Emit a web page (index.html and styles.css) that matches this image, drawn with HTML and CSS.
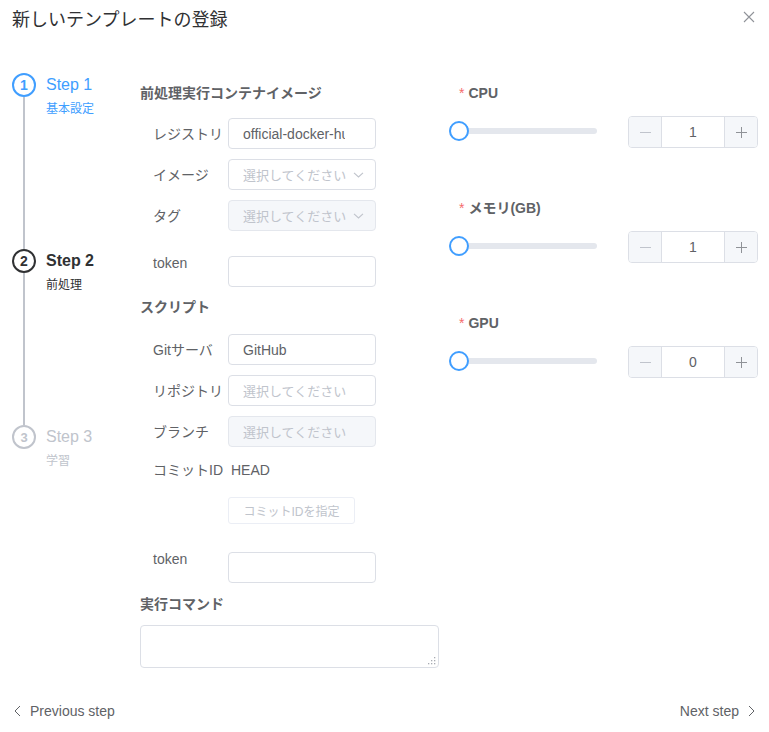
FILE: index.html
```html
<!DOCTYPE html>
<html lang="ja">
<head>
<meta charset="utf-8">
<title>新しいテンプレートの登録</title>
<link rel="stylesheet" href="styles.css">
</head>
<body>
<div class="dialog">
  <header class="dlg-head">
    <h1 class="dlg-title">新しいテンプレートの登録</h1>
    <button class="close-btn" aria-label="close">
      <svg width="12" height="12" viewBox="0 0 12 12"><path d="M1 1L11 11M11 1L1 11" stroke="#909399" stroke-width="1.1" fill="none"/></svg>
    </button>
  </header>

  <div class="dlg-body">
    <!-- steps -->
    <div class="steps">
      <div class="step done">
        <div class="step-rail"><div class="step-icon">1</div><div class="step-line"></div></div>
        <div class="step-text"><div class="step-title">Step 1</div><div class="step-desc">基本設定</div></div>
      </div>
      <div class="step active">
        <div class="step-rail"><div class="step-icon">2</div><div class="step-line"></div></div>
        <div class="step-text"><div class="step-title">Step 2</div><div class="step-desc">前処理</div></div>
      </div>
      <div class="step wait last">
        <div class="step-rail"><div class="step-icon">3</div></div>
        <div class="step-text"><div class="step-title">Step 3</div><div class="step-desc">学習</div></div>
      </div>
    </div>

    <!-- form -->
    <div class="form-col">
      <div class="sec-title first">前処理実行コンテナイメージ</div>
      <div class="row r-first">
        <label class="lbl">レジストリ</label>
        <div class="field"><input class="inp inp-sel" value="official-docker-hub" readonly></div>
      </div>
      <div class="row">
        <label class="lbl">イメージ</label>
        <div class="field sel">
          <input class="inp inp-sel" placeholder="選択してください" readonly>
          <svg class="arrow" width="11" height="6" viewBox="0 0 11 6"><path d="M1 0.8L5.5 5L10 0.8" stroke="#c0c4cc" stroke-width="1.1" fill="none"/></svg>
        </div>
      </div>
      <div class="row">
        <label class="lbl">タグ</label>
        <div class="field sel">
          <input class="inp inp-sel disabled" placeholder="選択してください" disabled>
          <svg class="arrow" width="11" height="6" viewBox="0 0 11 6"><path d="M1 0.8L5.5 5L10 0.8" stroke="#c0c4cc" stroke-width="1.1" fill="none"/></svg>
        </div>
      </div>
      <div class="row top-row token1">
        <label class="lbl">token</label>
        <div class="field"><input class="inp"></div>
      </div>

      <div class="sec-title script">スクリプト</div>
      <div class="row r-first2">
        <label class="lbl">Gitサーバ</label>
        <div class="field"><input class="inp" value="GitHub" readonly></div>
      </div>
      <div class="row">
        <label class="lbl">リポジトリ</label>
        <div class="field"><input class="inp" placeholder="選択してください" readonly></div>
      </div>
      <div class="row">
        <label class="lbl">ブランチ</label>
        <div class="field"><input class="inp disabled" placeholder="選択してください" disabled></div>
      </div>
      <div class="row text-row">
        <label class="lbl">コミットID</label>
        <span class="val">HEAD</span>
      </div>
      <button class="commit-btn" disabled>コミットIDを指定</button>
      <div class="row top-row token2">
        <label class="lbl">token</label>
        <div class="field"><input class="inp"></div>
      </div>

      <div class="sec-title cmd">実行コマンド</div>
      <div class="ta-wrap">
        <textarea class="ta"></textarea>
        <svg class="grip" width="8" height="8" viewBox="0 0 8 8">
          <rect x="6" y="0" width="1.3" height="1.3" fill="#a8abb2"/>
          <rect x="3" y="3" width="1.3" height="1.3" fill="#a8abb2"/>
          <rect x="6" y="3" width="1.3" height="1.3" fill="#a8abb2"/>
          <rect x="0" y="6" width="1.3" height="1.3" fill="#a8abb2"/>
          <rect x="3" y="6" width="1.3" height="1.3" fill="#a8abb2"/>
          <rect x="6" y="6" width="1.3" height="1.3" fill="#a8abb2"/>
        </svg>
      </div>
    </div>

    <!-- resources -->
    <div class="res-col">
      <div class="res">
        <div class="res-label"><span class="star">*</span>CPU</div>
        <div class="res-row">
          <div class="slider"><div class="track"></div><div class="thumb"></div></div>
          <div class="num">
            <span class="num-btn minus"><svg width="11" height="11" viewBox="0 0 11 11"><path d="M0 5.5H11" stroke="#c0c4cc" stroke-width="1"/></svg></span>
            <span class="num-val">1</span>
            <span class="num-btn plus"><svg width="11" height="11" viewBox="0 0 11 11"><path d="M0 5.5H11M5.5 0V11" stroke="#8f9297" stroke-width="1"/></svg></span>
          </div>
        </div>
      </div>
      <div class="res">
        <div class="res-label"><span class="star">*</span>メモリ(GB)</div>
        <div class="res-row">
          <div class="slider"><div class="track"></div><div class="thumb"></div></div>
          <div class="num">
            <span class="num-btn minus"><svg width="11" height="11" viewBox="0 0 11 11"><path d="M0 5.5H11" stroke="#c0c4cc" stroke-width="1"/></svg></span>
            <span class="num-val">1</span>
            <span class="num-btn plus"><svg width="11" height="11" viewBox="0 0 11 11"><path d="M0 5.5H11M5.5 0V11" stroke="#8f9297" stroke-width="1"/></svg></span>
          </div>
        </div>
      </div>
      <div class="res">
        <div class="res-label"><span class="star">*</span>GPU</div>
        <div class="res-row">
          <div class="slider"><div class="track"></div><div class="thumb"></div></div>
          <div class="num">
            <span class="num-btn minus"><svg width="11" height="11" viewBox="0 0 11 11"><path d="M0 5.5H11" stroke="#c0c4cc" stroke-width="1"/></svg></span>
            <span class="num-val">0</span>
            <span class="num-btn plus"><svg width="11" height="11" viewBox="0 0 11 11"><path d="M0 5.5H11M5.5 0V11" stroke="#8f9297" stroke-width="1"/></svg></span>
          </div>
        </div>
      </div>
    </div>
  </div>

  <footer class="dlg-foot">
    <a class="nav prev"><svg width="7" height="12" viewBox="0 0 7 12"><path d="M6 1L1 6L6 11" stroke="#606266" stroke-width="1" fill="none"/></svg><span>Previous step</span></a>
    <a class="nav next"><span>Next step</span><svg width="7" height="12" viewBox="0 0 7 12"><path d="M1 1L6 6L1 11" stroke="#606266" stroke-width="1" fill="none"/></svg></a>
  </footer>
</div>
</body>
</html>
```

FILE: styles.css
```css
* { box-sizing: border-box; }
html, body { margin: 0; padding: 0; background: #fff; }
body {
  font-family: "Liberation Sans", "Noto Sans CJK JP", sans-serif;
  font-size: 14px;
  color: #606266;
}
.dialog { width: 769px; height: 732px; }

.dlg-head {
  height: 40px;
  display: flex;
  justify-content: space-between;
  align-items: flex-start;
  padding: 8px 14px 0 12px;
}
.dlg-title {
  margin: 0;
  font-size: 18px;
  font-weight: normal;
  line-height: 24px;
  color: #303133;
}
.close-btn {
  border: 0;
  background: none;
  padding: 0;
  margin-top: 3px;
  width: 12px;
  height: 12px;
  display: block;
}
.close-btn svg { display: block; }

.dlg-body {
  display: grid;
  grid-template-columns: 140px 300px 1fr;
}

/* steps */
.steps { padding-top: 33px; display: flex; flex-direction: column; }
.step { display: flex; height: 176px; padding-left: 12px; }
.step.last { height: auto; }
.step-rail { width: 24px; display: flex; flex-direction: column; align-items: center; }
.step-icon {
  width: 24px; height: 24px;
  border: 2px solid #409eff;
  border-radius: 50%;
  display: flex; align-items: center; justify-content: center;
  font-size: 14px; font-weight: bold;
  line-height: 1;
  flex: none;
}
.step-line { width: 2px; flex: 1; background: #c0c4cc; }
.step-text { margin-left: 10px; }
.step-title { font-size: 16px; line-height: 24px; }
.step-desc { font-size: 12px; line-height: 20px; margin-top: 2px; }

.step.done .step-icon { border-color: #409eff; color: #409eff; }
.step.done .step-title, .step.done .step-desc { color: #409eff; }
.step.active .step-icon { border-color: #303133; color: #303133; }
.step.active .step-title { color: #303133; font-weight: bold; }
.step.active .step-desc { color: #303133; }
.step.wait .step-icon { border-color: #c0c4cc; color: #c0c4cc; font-size: 13px; }
.step.wait .step-title, .step.wait .step-desc { color: #c0c4cc; }

/* form */
.form-col { padding-top: 43px; display: flex; flex-direction: column; align-items: flex-start; }
.sec-title { font-weight: bold; font-size: 14px; line-height: 20px; color: #606266; }
.sec-title.script { margin-top: 10px; }
.sec-title.cmd { margin-top: 11px; }

.row { display: flex; align-items: center; height: 31px; margin-top: 10px; padding-left: 13px; }
.row.r-first { margin-top: 15px; }
.row.r-first2 { margin-top: 17px; }
.row.top-row { align-items: flex-start; height: auto; }
.row.top-row .lbl { line-height: 20px; }
.row.top-row .field { margin-top: 3px; }
.row.token1 { margin-top: 22px; }
.row.token2 { margin-top: 25px; }
.row.text-row { height: 20px; margin-top: 13px; }

.lbl { width: 75px; line-height: 20px; color: #606266; white-space: nowrap; }
.val { color: #606266; line-height: 20px; padding-left: 3px; }

.field { position: relative; width: 148px; height: 31px; }
.inp {
  width: 148px; height: 31px;
  border: 1px solid #dcdfe6;
  border-radius: 4px;
  padding: 0 14px;
  font-family: inherit;
  font-size: 14px;
  color: #606266;
  background: #fff;
  outline: none;
}
.inp-sel { padding-right: 30px; }
.inp::placeholder { color: #c0c4cc; opacity: 1; font-size: 13px; }
.inp.disabled { background: #f5f7fa; border-color: #e4e7ed; }
.sel .inp-sel { padding-right: 26px; }
.arrow { position: absolute; right: 12px; top: 13px; }

.commit-btn {
  margin-top: 17px;
  margin-left: 88px;
  width: 127px;
  height: 27px;
  border: 1px solid #ebeef5;
  border-radius: 3px;
  background: #fff;
  color: #c0c4cc;
  font-family: inherit;
  font-size: 12px;
  padding: 0;
}

.ta-wrap { position: relative; margin-top: 11px; width: 299px; height: 43px; }
.ta {
  display: block;
  width: 299px; height: 43px;
  border: 1px solid #dcdfe6;
  border-radius: 4px;
  resize: none;
  outline: none;
  font-family: inherit;
}
.grip { position: absolute; right: 3px; bottom: 3px; }

/* resources */
.res-col { padding-top: 43px; }
.res { height: 115px; }
.res-label {
  font-weight: bold; font-size: 14px; line-height: 20px;
  color: #606266;
  padding-left: 19px;
}
.star { color: #f56c6c; font-weight: normal; margin-right: 4px; }
.res-row {
  margin-top: 13px;
  display: flex;
  align-items: center;
  padding-left: 9px;
  height: 32px;
}
.slider { position: relative; width: 148px; height: 20px; margin-top: -2px; }
.track { position: absolute; left: 0; right: 0; top: 7px; height: 6px; border-radius: 3px; background: #e4e7ed; }
.thumb {
  position: absolute; left: 0; top: 0;
  width: 20px; height: 20px;
  border: 2px solid #409eff;
  border-radius: 50%;
  background: #fff;
}
.num {
  margin-left: 31px;
  width: 130px; height: 32px;
  border: 1px solid #dcdfe6;
  border-radius: 4px;
  display: flex;
  overflow: hidden;
}
.num-btn { width: 33px; background: #f5f7fa; display: flex; align-items: center; justify-content: center; }
.num-btn svg { display: block; }
.minus { border-right: 1px solid #dcdfe6; }
.plus { border-left: 1px solid #dcdfe6; }
.num-val { flex: 1; text-align: center; line-height: 30px; color: #606266; }

/* footer */
.dlg-foot {
  margin-top: 33px;
  display: flex;
  justify-content: space-between;
  padding: 0 14px;
  line-height: 20px;
}
.nav { display: flex; align-items: center; color: #606266; font-size: 14px; }
.nav.prev svg { margin-right: 9px; }
.nav.next svg { margin-left: 9px; }
```
